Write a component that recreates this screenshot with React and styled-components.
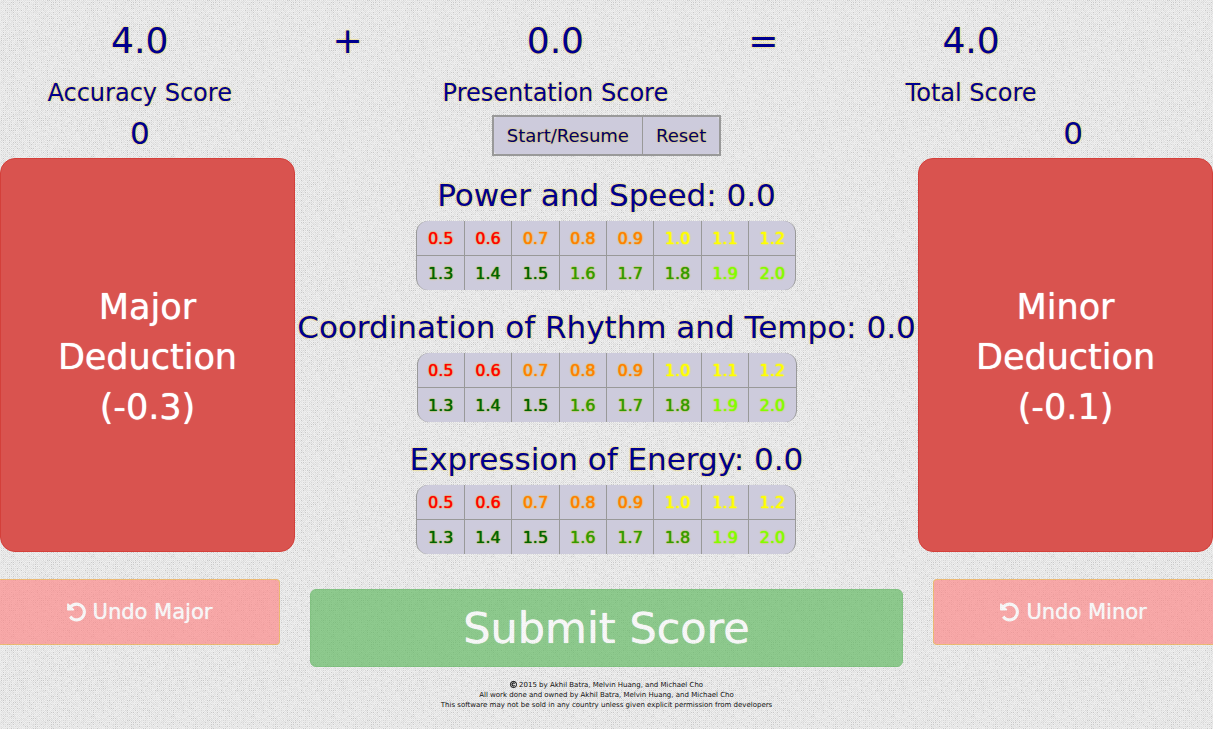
import React, { useState } from "react";
import styled, { createGlobalStyle } from "styled-components";
import { FaRegCopyright } from "react-icons/fa";

// Woven paper texture: a small tile of one-pixel specks in several greys.
function makeTexture(size) {
  const shades = ["#f0f0f0", "#e0e0e0", "#d6d6d6", "#c8c8c8"];
  const paths = shades.map(() => "");
  let seed = 7;
  const random = () => {
    seed = (seed * 16807) % 2147483647;
    return seed / 2147483647;
  };
  for (let y = 0; y < size; y += 1) {
    for (let x = 0; x < size; x += 1) {
      const r = random();
      let shade = -1;
      if ((x + y) % 2 === 0) shade = r < 0.6 ? 0 : -1;
      else if (y % 2 === 0) shade = r < 0.2 ? 3 : r < 0.5 ? 2 : 1;
      else shade = r < 0.5 ? 1 : -1;
      if (shade >= 0) paths[shade] += `M${x} ${y}h1v1h-1z`;
    }
  }
  const body = paths.map((d, i) => `<path fill="${shades[i]}" d="${d}"/>`).join("");
  const svg = `<svg xmlns="http://www.w3.org/2000/svg" width="${size}" height="${size}" shape-rendering="crispEdges"><rect width="100%" height="100%" fill="#e9e9e9"/>${body}</svg>`;
  return `url("data:image/svg+xml,${encodeURIComponent(svg)}")`;
}

const texture = makeTexture(80);

const GlobalStyle = createGlobalStyle`
  *, *::before, *::after { box-sizing: border-box; }
  body {
    margin: 0;
    min-height: 100vh;
    background: #e6e6e6 ${texture};
    color: #000090;
    font-family: Verdana, "DejaVu Sans", sans-serif;
  }
  button { font-family: inherit; cursor: pointer; }
`;

const Page = styled.div`
  overflow-x: hidden;
  text-shadow: 0 0 2px #f0c800;
`;

const ScoreBar = styled.header`
  display: grid;
  grid-template-columns: 82fr 40fr 82fr 40fr 82fr 30fr;
  padding-top: 16px;
  text-align: center;
`;

const Score = styled.div`
  font-size: 36px;
  line-height: 50px;
`;

const ScoreLabel = styled.div`
  padding-top: 10px;
  font-size: 24px;
  line-height: 34px;
  white-space: nowrap;
`;

const Columns = styled.main`
  display: grid;
  grid-template-columns: minmax(0, 3fr) minmax(0, 7fr) minmax(0, 3fr);
`;

const Side = styled.section`
  display: flex;
  flex-direction: column;
  align-items: ${(p) => (p.$right ? "flex-end" : "flex-start")};
  padding-top: 2px;
`;

const Count = styled.div`
  width: 100%;
  padding-bottom: 4px;
  font-size: 31px;
  line-height: 42px;
  text-align: center;
`;

const Deduction = styled.button`
  width: calc(100% + 15px);
  height: 394px;
  padding: 4px 50px 0;
  border: 1px solid #d43f3a;
  border-radius: 15px;
  background: #d9534f;
  color: #fff;
  font-size: 35px;
  line-height: 50px;
  text-shadow: 0 0 1px currentcolor;
`;

const Undo = styled.button`
  display: flex;
  align-items: center;
  justify-content: center;
  gap: 7px;
  width: 100%;
  height: 66px;
  margin-top: 27px;
  border: 1px solid #eea236;
  border-width: ${(p) => (p.$right ? "1px 0 1px 1px" : "1px 1px 1px 0")};
  border-radius: ${(p) => (p.$right ? "4px 0 0 4px" : "0 4px 4px 0")};
  background: #ff8585;
  color: #fff;
  font-size: 21px;
  text-shadow: 0 0 1px currentcolor;
  opacity: 0.65;
`;

const UndoArrow = styled.svg`
  width: 19px;
  height: 22px;
  fill: currentcolor;
`;

const Center = styled.section`
  display: flex;
  flex-direction: column;
  align-items: center;
  padding: 5px 30px 0;
`;

const TimerGroup = styled.div`
  display: flex;
  margin-bottom: 16px;
  border: 2px solid #999;
`;

const TimerButton = styled.button`
  height: 37px;
  padding: 0 13px;
  border: 0 solid #999;
  border-left-width: ${(p) => (p.$last ? "1px" : "0")};
  border-radius: ${(p) => (p.$last ? "0 3px 3px 0" : "3px 0 0 3px")};
  background: #cdcbdc;
  color: #00006c;
  font-size: 18px;
  text-shadow: inherit;
`;

const Category = styled.div`
  display: flex;
  flex-direction: column;
  align-items: center;
  margin-bottom: 14px;
`;

const CategoryTitle = styled.h2`
  margin: 0;
  padding-bottom: 2px;
  font-size: 31px;
  font-weight: 400;
  line-height: 47px;
  white-space: nowrap;
`;

const Grid = styled.div`
  display: grid;
  grid-template-columns: repeat(8, 1fr);
  gap: 1px;
  width: 380px;
  overflow: hidden;
  border: solid #999;
  border-width: 0 1px;
  border-radius: 12px;
  background: #999;
`;

const Mark = styled.button`
  height: 34px;
  padding: 0;
  border: 0;
  background: #cdcbdc;
  color: ${(p) => p.$color};
  font-size: 16px;
  text-shadow: 0 0 1px currentcolor, 0 0 2px ${(p) => p.$glow};
`;

const Submit = styled.button`
  width: 100%;
  height: 78px;
  margin-top: 21px;
  border: 1px solid #4cae4c;
  border-radius: 6px;
  background: #5cb85c;
  color: #fff;
  font-size: 43px;
  text-shadow: 0 0 1px currentcolor;
  opacity: 0.65;
`;

const Footer = styled.footer`
  padding-top: 13px;
  color: #111;
  font-size: 7px;
  line-height: 10px;
  text-align: center;
  text-shadow: none;
  p { margin: 0; }
  svg { vertical-align: -1px; stroke: currentcolor; stroke-width: 20px; }
`;

const marks = [
  ["0.5", "#ff0000"], ["0.6", "#ff0000"], ["0.7", "#ff7f00"], ["0.8", "#ff7f00"],
  ["0.9", "#ff7f00"], ["1.0", "#ffff00"], ["1.1", "#ffff00"], ["1.2", "#ffff00"],
  ["1.3", "#006400"], ["1.4", "#006400"], ["1.5", "#006400"], ["1.6", "#329b00"],
  ["1.7", "#329b00"], ["1.8", "#329b00"], ["1.9", "#7fff00"], ["2.0", "#7fff00"],
];

const categories = ["Power and Speed", "Coordination of Rhythm and Tempo", "Expression of Energy"];

function UndoIcon() {
  return (
    <UndoArrow viewBox="0 0 1536 1792" aria-hidden="true">
      <path d="M1536 896q0 156-61 298t-164 245-245 164-298 61q-172 0-327-72.500T177 1387q-7-10-6.500-22.500T179 1344l137-138q10-9 25-9 16 2 23 12 73 95 179 147t225 52q104 0 198.500-40.500T1130 1258t109.500-163.500T1280 896t-40.500-198.500T1130 534 966.500 424.500 768 384q-98 0-188 35.500T420 521l137 138q31 30 14 69-17 40-59 40H64q-26 0-45-19T0 704V256q0-42 40-59 39-17 69 14l130 129q107-101 244.500-156.500T768 128q156 0 298 61t245 164 164 245 61 298z" />
    </UndoArrow>
  );
}

export default function App() {
  const [major, setMajor] = useState(0);
  const [minor, setMinor] = useState(0);
  const [given, setGiven] = useState([0, 0, 0]);

  const accuracy = Math.max(0, 4 - major * 0.3 - minor * 0.1);
  const presentation = given.reduce((sum, n) => sum + n, 0);

  return (
    <Page>
      <GlobalStyle />
      <ScoreBar>
        <div>
          <Score>{accuracy.toFixed(1)}</Score>
          <ScoreLabel>Accuracy Score</ScoreLabel>
        </div>
        <Score>+</Score>
        <div>
          <Score>{presentation.toFixed(1)}</Score>
          <ScoreLabel>Presentation Score</ScoreLabel>
        </div>
        <Score>=</Score>
        <div>
          <Score>{(accuracy + presentation).toFixed(1)}</Score>
          <ScoreLabel>Total Score</ScoreLabel>
        </div>
      </ScoreBar>
      <Columns>
        <Side>
          <Count>{major}</Count>
          <Deduction onClick={() => setMajor(major + 1)}>Major Deduction (-0.3)</Deduction>
          <Undo onClick={() => setMajor(Math.max(0, major - 1))}>
            <UndoIcon />
            Undo Major
          </Undo>
        </Side>
        <Center>
          <TimerGroup>
            <TimerButton>Start/Resume</TimerButton>
            <TimerButton $last>Reset</TimerButton>
          </TimerGroup>
          {categories.map((name, row) => (
            <Category key={name}>
              <CategoryTitle>{`${name}: ${given[row].toFixed(1)}`}</CategoryTitle>
              <Grid>
                {marks.map(([value, color]) => (
                  <Mark
                    key={value}
                    $color={color}
                    $glow={color === "#ffff00" ? "#ffff00" : "#f0c800"}
                    onClick={() => setGiven(given.map((g, i) => (i === row ? Number(value) : g)))}
                  >
                    {value}
                  </Mark>
                ))}
              </Grid>
            </Category>
          ))}
          <Submit>Submit Score</Submit>
        </Center>
        <Side $right>
          <Count>{minor}</Count>
          <Deduction onClick={() => setMinor(minor + 1)}>Minor Deduction (-0.1)</Deduction>
          <Undo $right onClick={() => setMinor(Math.max(0, minor - 1))}>
            <UndoIcon />
            Undo Minor
          </Undo>
        </Side>
      </Columns>
      <Footer>
        <p><FaRegCopyright aria-hidden="true" /> 2015 by Akhil Batra, Melvin Huang, and Michael Cho</p>
        <p>All work done and owned by Akhil Batra, Melvin Huang, and Michael Cho</p>
        <p>This software may not be sold in any country unless given explicit permission from developers</p>
      </Footer>
    </Page>
  );
}
